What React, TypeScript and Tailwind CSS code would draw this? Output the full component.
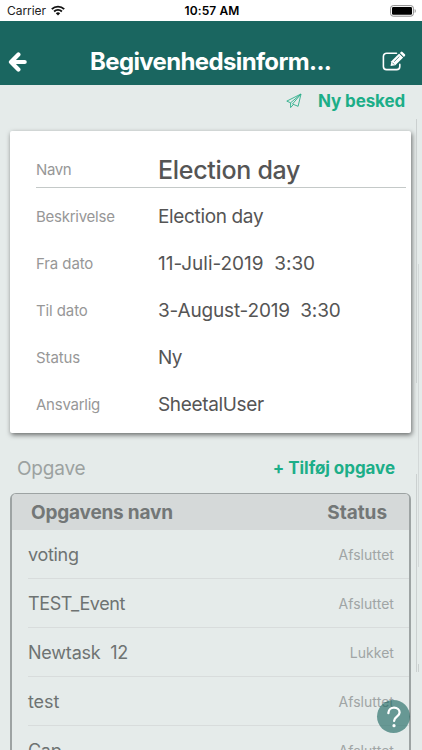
type Detail = { label: string; value: string; valueClass: string; labelClass: string };
type Task = { name: string; status: string; nameClass: string };

const details: Detail[] = [
  { label: "Beskrivelse", value: "Election day", labelClass: "tracking-[-0.25px]", valueClass: "tracking-[-0.35px]" },
  { label: "Fra dato", value: "11-Juli-2019  3:30", labelClass: "tracking-[-0.1px]", valueClass: "tracking-[-0.02px]" },
  { label: "Til dato", value: "3-August-2019  3:30", labelClass: "tracking-[-0.1px]", valueClass: "tracking-[-0.17px]" },
  { label: "Status", value: "Ny", labelClass: "tracking-[-0.1px]", valueClass: "tracking-[-0.7px]" },
  { label: "Ansvarlig", value: "SheetalUser", labelClass: "tracking-[-0.25px]", valueClass: "tracking-[-0.35px]" },
];

const tasks: Task[] = [
  { name: "voting", status: "Afsluttet", nameClass: "tracking-[-0.3px]" },
  { name: "TEST_Event", status: "Afsluttet", nameClass: "tracking-[-0.4px]" },
  { name: "Newtask  12", status: "Lukket", nameClass: "tracking-[-0.2px]" },
  { name: "test", status: "Afsluttet", nameClass: "tracking-[-0.1px]" },
  { name: "Cap", status: "Afsluttet", nameClass: "tracking-[-0.3px]" },
];

function StatusBar() {
  return (
    <div className="flex h-[21px] shrink-0 items-center bg-white text-[12px] text-[#222]">
      <div className="flex w-[141px] items-center pl-[7px]">
        <span className="w-[44px] whitespace-nowrap tracking-[-0.05px]">Carrier</span>
        <svg width="14" height="11" viewBox="0 0 14 11" className="-mt-px" fill="none" stroke="#111" strokeWidth="1.9">
          <path d="M0.8 4.1a8.9 8.9 0 0 1 12.4 0" />
          <path d="M3.1 6.5a5.6 5.6 0 0 1 7.8 0" />
          <path d="M7 10.6 4.8 8.3a3.1 3.1 0 0 1 4.4 0z" fill="#111" stroke="none" />
        </svg>
      </div>
      <span className="w-[142px] pt-px text-center font-semibold tracking-[0.12px] whitespace-nowrap text-black">10:57 AM</span>
      <div className="flex flex-1 justify-end pr-[5px]">
        <svg width="27" height="12" viewBox="0 0 27 12">
          <rect x="0.6" y="0.6" width="22.8" height="10.6" rx="2.6" fill="none" stroke="#8c8c8c" />
          <rect x="2" y="2" width="20" height="7.8" rx="1.2" fill="#000" />
          <path d="M24.7 4v4c1.4-.5 1.4-3.5 0-4z" fill="#8c8c8c" />
        </svg>
      </div>
    </div>
  );
}

function Header() {
  return (
    <header className="flex h-16 shrink-0 items-center bg-[#1a6660] pt-[18px] text-white">
      <button aria-label="Tilbage" className="ml-[8px] w-[19px]">
        <svg width="19" height="20" viewBox="0 0 19 20" fill="none" stroke="#fff" strokeWidth="4.2">
          <path d="M10.4 2.6 3 10l7.4 7.4M4 10H16.7" strokeLinejoin="round" strokeLinecap="round" />
        </svg>
      </button>
      <h1 className="ml-[63px] w-[250px] text-[24px] leading-[30px] font-bold tracking-[-0.64px] whitespace-nowrap">
        Begivenhedsinform...
      </h1>
      <button aria-label="Rediger" className="ml-[42px] -mt-[3px]">
        <svg width="24" height="20" viewBox="0 0 24 20" fill="none" stroke="#fff">
          <path d="M14.5 2.2H4.6A3.2 3.2 0 0 0 1.4 5.4v10a3.2 3.2 0 0 0 3.2 3.2h10a3.2 3.2 0 0 0 3.2-3.2v-2" strokeWidth="1.6" strokeLinecap="round" />
          <path d="m8.6 15 .7-4.8 7.9-7.6 4 4-7.9 7.7z" fill="#fff" stroke="none" />
          <path d="m17.9 2 1-1a1.1 1.1 0 0 1 1.6 0l2.4 2.3a1.1 1.1 0 0 1 0 1.6l-1 1z" fill="#fff" stroke="none" />
          <path d="m12.2 10.7 5.2-5.2M10.3 11.6l1.9 1.9M17.3 2.4l4.2 4.1" stroke="#1a6660" strokeWidth="0.7" />
        </svg>
      </button>
    </header>
  );
}

function MessageLink() {
  return (
    <div className="flex h-[46px] shrink-0 items-start justify-end pt-[4px] pr-[17px]">
      <svg width="16" height="16" viewBox="0 0 16 16" fill="none" stroke="#2aae8a" strokeWidth="0.9" strokeLinejoin="round" className="mt-[4px] mr-[16px]">
        <path d="M15 1 .8 8.1l3.8 1.7L15 1 6.5 11l5.6 2.3zM4.6 9.8v4.8L7.5 11.4" />
      </svg>
      <span className="w-[87px] pt-px text-[17px] leading-[22px] font-bold tracking-[-0.12px] whitespace-nowrap text-[#1cae88]">Ny besked</span>
    </div>
  );
}

function DetailCard() {
  return (
    <section className="mr-[11px] ml-[10px] h-[302px] shrink-0 rounded-[2px] bg-white pl-[26px] shadow-[1px_2px_5px_rgba(0,0,0,0.55)]">
      <div className="mr-[5px] flex h-[57px] items-center border-b border-[#c4c9c8] pt-[22px]">
        <span className="w-[122px] text-[15px] tracking-[-0.4px] text-[#979797]">Navn</span>
        <span className="text-[25px] leading-[30px] font-medium tracking-[-0.3px] whitespace-nowrap text-[#555]">Election day</span>
      </div>
      <div className="mt-[6px]">
        {details.map((d) => (
          <div key={d.label} className="flex h-[47px] items-center whitespace-pre">
            <span className={`w-[122px] text-[15px] text-[#979797] ${d.labelClass}`}>{d.label}</span>
            <span className={`text-[19px] text-[#555] ${d.valueClass}`}>{d.value}</span>
          </div>
        ))}
      </div>
    </section>
  );
}

function TaskTable() {
  return (
    <section className="mr-[11px] ml-[10px] h-[400px] shrink-0 rounded-t-[6px] border-2 border-t border-[#9da3a3]">
      <div className="flex h-[36px] items-center justify-between rounded-t-[4px] bg-[#d5d9d9] pt-[2px] pr-[22px] pl-[19px] text-[19px] font-bold text-[#737777]">
        <span className="tracking-[-0.2px]">Opgavens navn</span>
        <span className="tracking-[-0.05px]">Status</span>
      </div>
      {tasks.map((t, i) => (
        <div key={i} className="ml-[16px] flex h-[49px] items-center justify-between border-b border-[#d8dcdc] pr-[15px] whitespace-pre">
          <span className={`text-[18px] text-[#6e7372] ${t.nameClass}`}>{t.name}</span>
          <span className="text-[14px] tracking-[0.05px] text-[#a0a5a5]">{t.status}</span>
        </div>
      ))}
    </section>
  );
}

// Overlaid indicators of the nested scroll views
function ScrollMarks() {
  return (
    <div aria-hidden="true">
      <div className="absolute top-[119px] left-[416px] h-[264px] w-px bg-[#cbd0d0]" />
      <div className="absolute top-[264px] left-[418px] h-[303px] w-px bg-[#d3d8d8]" />
      <div className="absolute top-[474px] left-[416px] h-[198px] w-px bg-[#cbd0d0]" />
      <div className="absolute top-[664px] left-[418px] h-[8px] w-px bg-[#cbd0d0]" />
    </div>
  );
}

export default function App() {
  return (
    <main className="relative flex h-[750px] w-[422px] flex-col overflow-hidden bg-[#e5ebea] font-['Inter','Liberation_Sans',sans-serif]">
      <StatusBar />
      <Header />
      <MessageLink />
      <DetailCard />
      <div className="flex h-[60px] shrink-0 items-center justify-between pt-[12px] pr-[27px] pl-[17px]">
        <h2 className="pt-px text-[19px] tracking-[-0.2px] text-[#9ca2a1]">Opgave</h2>
        <button className="text-[17px] font-bold tracking-[-0.06px] whitespace-nowrap text-[#1cae88]">+ Tilføj opgave</button>
      </div>
      <TaskTable />
      <ScrollMarks />
      <button aria-label="Hjælp" className="absolute top-[700px] left-[377px] flex size-[33px] items-center justify-center rounded-full bg-[#1a6660]/62">
        <svg width="16" height="22" viewBox="0 0 16 22" fill="none" stroke="#fff" strokeWidth="2.3" strokeLinecap="round">
          <path d="M2.4 7.2V6.8A5.5 5.5 0 0 1 8 1.7c3.2 0 5.6 2 5.6 4.9 0 4.1-5.5 4.1-5.5 8.3" />
          <circle cx="8" cy="19.7" r="1.6" fill="#fff" stroke="none" />
        </svg>
      </button>
    </main>
  );
}
